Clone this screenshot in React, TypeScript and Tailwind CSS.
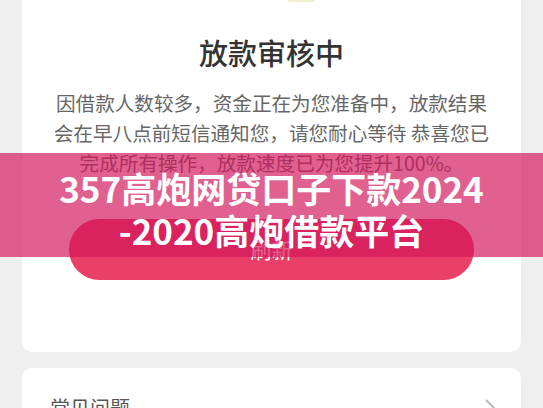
import React from 'react';

export default function App() {
  return (
    <div
      className="relative min-h-screen bg-[#efefef] overflow-hidden"
      style={{ fontFamily: '"Noto Sans CJK SC", "Noto Sans", sans-serif' }}
    >
      {/* Status card */}
      <div className="mx-[22px] bg-white rounded-b-[10px] flex flex-col items-center pt-0 pb-[72px]">
        <div className="ml-[60px] h-[2px] w-[27px] rounded-b-full bg-[#f1edcf]" />
        <h1 className="mt-[30px] text-[29px] leading-[40px] font-medium text-[#333]">放款审核中</h1>
        <p className="mt-[16px] text-center text-[19.6px] leading-[30px] text-[#666]">
          因借款人数较多，资金正在为您准备中，放款结果
          <br />
          会在早八点前短信通知您，请您耐心等待 恭喜您已
          <br />
          完成所有操作，放款速度已为您提升100%。
        </p>
        <button className="mt-[41px] self-stretch mx-[47px] h-[61px] rounded-full bg-[#ea4068] text-white text-[21px]">
          刷新
        </button>
      </div>

      {/* FAQ card */}
      <div className="mx-[22px] mt-[16px] bg-white rounded-[10px] pl-[28px] pr-[26px] pt-[25px] pb-[30px] flex items-center justify-between">
        <span className="text-[20px] leading-[30px] text-[#555]">常见问题</span>
        <svg width="10" height="18" viewBox="0 0 10 18" fill="none" stroke="#bbb" strokeWidth="2">
          <path d="M1 1l8 8-8 8" />
        </svg>
      </div>

      {/* Banner overlay */}
      <div className="absolute left-0 right-0 top-[153px] h-[104px] bg-[rgba(209,21,90,0.68)] flex flex-col items-center pt-[14px]">
        <div className="text-white font-bold text-[35px] leading-[42px] text-center">
          357高炮网贷口子下款2024
          <br />
          -2020高炮借款平台
        </div>
      </div>
    </div>
  );
}
